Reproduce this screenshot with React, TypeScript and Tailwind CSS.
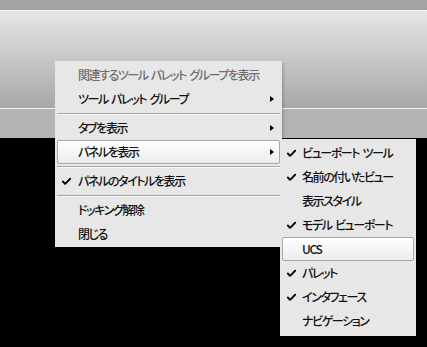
import { Check } from 'lucide-react';

type Item = { label: string; checked?: boolean; disabled?: boolean; sub?: boolean; active?: boolean };

const mainMenu: (Item | 'sep')[] = [
  { label: '関連するツール パレット グループを表示', disabled: true },
  { label: 'ツール パレット グループ', sub: true },
  'sep',
  { label: 'タブを表示', sub: true },
  { label: 'パネルを表示', sub: true, active: true },
  'sep',
  { label: 'パネルのタイトルを表示', checked: true },
  'sep',
  { label: 'ドッキング解除' },
  { label: '閉じる' },
];

const subMenu: Item[] = [
  { label: 'ビューポート ツール', checked: true },
  { label: '名前の付いたビュー', checked: true },
  { label: '表示スタイル' },
  { label: 'モデル ビューポート', checked: true },
  { label: 'UCS', active: true },
  { label: 'パレット', checked: true },
  { label: 'インタフェース', checked: true },
  { label: 'ナビゲーション' },
];

function Row({ item, textLeft }: { item: Item; textLeft: string }) {
  return (
    <div
      className={`relative flex h-6 items-center mx-[2px] ${
        item.active ? 'rounded-[2px] border border-[#a7a7a7] bg-gradient-to-b from-[#ffffff] to-[#ececec]' : 'border border-transparent'
      }`}
    >
      {item.checked && (
        <Check className="absolute left-[3px] top-[6px] h-[11px] w-[11px] text-black" strokeWidth={4} />
      )}
      <span className={`${textLeft} whitespace-nowrap ${item.disabled ? 'text-[#6e6e6e]' : 'text-[#111]'}`}>
        {item.label}
      </span>
      {item.sub && (
        <span className="absolute right-[5px] top-[8px] h-0 w-0 border-y-[3.5px] border-l-4 border-y-transparent border-l-black" />
      )}
    </div>
  );
}

export default function App() {
  const font =
    "font-['Noto_Sans_CJK_JP',sans-serif] font-medium text-[12px] tracking-[-1.4px] [word-spacing:2px] [font-feature-settings:'palt'] leading-none";
  return (
    <main className={`relative flex h-[347px] w-[427px] flex-col overflow-hidden bg-black ${font}`}>
      <div className="h-[10px] bg-[#a3a3a3]" />
      <div className="h-px bg-[#f7f7f7]" />
      <div className="h-[97px] bg-gradient-to-b from-[#e6e6e6] to-[#a8a8a8]" />
      <div className="h-px bg-[#f2f2f2]" />
      <div className="h-[29px] bg-[#b3b3b3]" />
      <div className="flex-1 bg-black" />

      {/* main context menu */}
      <div className="absolute left-[55px] top-[61px] w-[227px] bg-[#e7e7e7] pt-[2px] pb-px shadow-[2px_2px_2px_rgba(0,0,0,0.15)]">
        {mainMenu.map((it, i) =>
          it === 'sep' ? (
            <div key={i} className="flex h-[5px] flex-col justify-center px-[2px]">
              <div className="h-px bg-[#a5a5a5]" />
              <div className="h-px bg-[#f8f8f8]" />
            </div>
          ) : (
            <Row key={i} item={it} textLeft="pl-[20px]" />
          )
        )}
      </div>

      {/* submenu */}
      <div className="absolute left-[280px] top-[139px] w-[136px] bg-[#e7e7e7] pt-[2px] pb-[3px] shadow-[2px_2px_2px_rgba(0,0,0,0.15)]">
        {subMenu.map((it, i) => (
          <Row key={i} item={it} textLeft="pl-[19px]" />
        ))}
      </div>
    </main>
  );
}
